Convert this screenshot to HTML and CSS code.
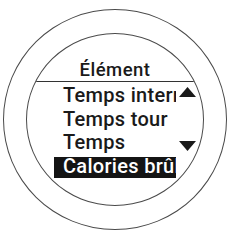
FILE: index.html
```html
<!DOCTYPE html>
<html lang="fr">
<head>
<meta charset="utf-8">
<link rel="stylesheet" href="styles.css">
</head>
<body>
<div class="watch">
  <div class="face">
    <div class="title">Élément</div>
    <div class="menu">
      <ul class="items">
        <li class="item">Temps intermédiaire</li>
        <li class="item">Temps tour</li>
        <li class="item">Temps</li>
        <li class="item selected">Calories brûlées</li>
      </ul>
      <div class="scroll">
        <svg class="arrow" width="17" height="10" viewBox="0 0 17 10"><polygon points="8.5,0 17,10 0,10" fill="#1a1a1a"/></svg>
        <svg class="arrow" width="17" height="10" viewBox="0 0 17 10"><polygon points="0,0 17,0 8.5,10" fill="#1a1a1a"/></svg>
      </div>
    </div>
  </div>
</div>
</body>
</html>
```
FILE: styles.css
```css
html, body {
  margin: 0;
  padding: 0;
  background: #fff;
}
body {
  width: 231px;
  height: 234px;
  overflow: hidden;
  font-family: Roboto, "DejaVu Sans", sans-serif;
  color: #1a1a1a;
}
.watch {
  box-sizing: border-box;
  margin: 9px 0 0 3px;
  width: 224px;
  height: 221px;
  border: 1.5px solid #4a4a4a;
  border-radius: 50%;
  display: flex;
  align-items: center;
  justify-content: center;
}
.face {
  box-sizing: border-box;
  width: 178px;
  height: 173px;
  border: 1.5px solid #4a4a4a;
  border-radius: 50%;
  overflow: hidden;
  display: flex;
  flex-direction: column;
}
.title {
  padding-top: 26px;
  padding-bottom: 1px;
  font-size: 18.5px;
  font-weight: 500;
  letter-spacing: 0.5px;
  line-height: 20px;
  text-align: center;
  border-bottom: 1.5px solid #333;
}
.menu {
  display: flex;
  padding: 4px 0 0 27px;
}
.items {
  list-style: none;
  margin: 0;
  padding: 0;
  width: 122px;
}
.item {
  height: 21px;
  line-height: 19px;
  margin-bottom: 2.5px;
  padding-left: 9px;
  font-size: 20px;
  font-weight: 500;
  letter-spacing: 0.3px;
  white-space: nowrap;
  overflow: hidden;
}
.selected {
  background: #141414;
  color: #fff;
}
.scroll {
  display: flex;
  flex-direction: column;
  justify-content: space-between;
  margin-left: 3px;
  padding-top: 1px;
  height: 64px;
}
.arrow {
  display: block;
}
```
